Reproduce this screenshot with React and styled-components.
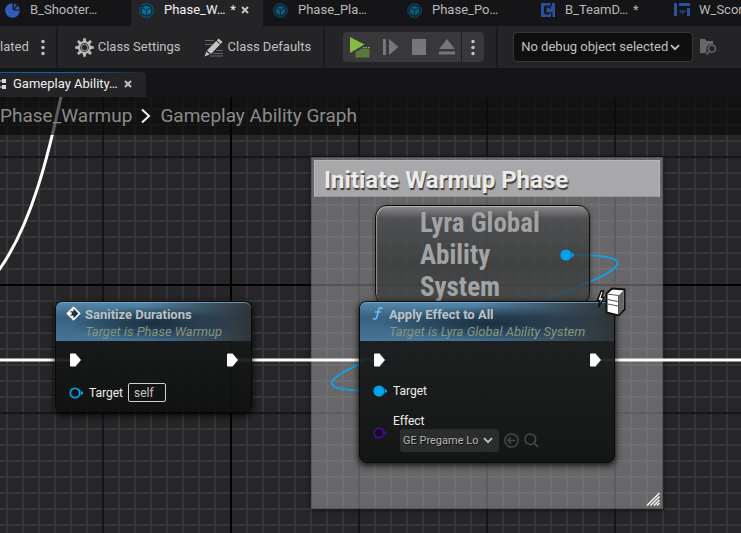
import React from "react";
import styled, { createGlobalStyle, css } from "styled-components";

const GlobalStyle = createGlobalStyle`
  *, *::before, *::after { box-sizing: border-box; }
  body {
    margin: 0;
    background: #151517;
    color: #c0c0c0;
    font-family: Roboto, "Liberation Sans", sans-serif;
    font-size: 13px;
    line-height: 16px;
    overflow: hidden;
  }
  button, input, select { font: inherit; color: inherit; }
  button { background: none; border: 0; padding: 0; }
  h2, h3, p { margin: 0; }
  svg { display: block; flex: none; }
`;

/* ---------- shell ---------- */

const Editor = styled.div`
  display: flex;
  flex-direction: column;
  min-height: 100vh;
  overflow: hidden;
`;

const AssetTabs = styled.nav`
  display: flex;
  gap: 2px;
  height: 26px;
  margin-left: -3px;
  overflow: hidden;
`;

const AssetTab = styled.button`
  display: flex;
  flex: none;
  align-items: center;
  gap: 10px;
  width: 132px;
  padding: 0 8px 6px;
  white-space: nowrap;
  color: ${(p) => (p.$active ? "#f2f2f2" : "#b8b8b8")};
  background: ${(p) => (p.$active ? "#242426" : "transparent")};

  svg { overflow: visible; }
`;

const TabMark = styled.span`
  display: flex;
  align-items: center;
  gap: 5px;
  margin-left: -5px;
`;

const Toolbar = styled.div`
  display: flex;
  align-items: center;
  height: 42px;
  background: #242426;
  overflow: hidden;
`;

const ToolButton = styled.button`
  display: flex;
  flex: none;
  align-items: center;
  gap: 4px;
  height: 30px;
  margin-left: ${(p) => p.$gap || 0}px;
  white-space: nowrap;
`;

const Divider = styled.span`
  flex: none;
  width: 2px;
  height: 40px;
  margin-left: ${(p) => p.$gap || 0}px;
  background: #19191b;
`;

const PlayGroup = styled.div`
  display: flex;
  flex: none;
  height: 30px;
  margin-left: 18px;
  border-radius: 4px;
  overflow: hidden;
  background: #38383a;
`;

const PlayButton = styled.button`
  display: flex;
  align-items: center;
  justify-content: center;
  width: ${(p) => (p.$menu ? 23 : 28)}px;
  border-left: ${(p) => (p.$menu ? "1px solid #202022" : "0")};
  &:first-child { width: 34px; }
`;

const SelectBox = styled.label`
  position: relative;
  display: flex;
  flex: none;
  align-items: center;

  select {
    appearance: none;
    outline: 0;
    ${(p) =>
      p.$small
        ? css`
            width: 99px;
            height: 23px;
            padding: 0 19px 0 3px;
            font-size: 11px;
            color: #b4b4b4;
            background: #2b2c2c;
            border: 0;
            border-radius: 3px;
            text-shadow: 1px 1px 0 #111;
          `
        : css`
            width: 180px;
            height: 30px;
            padding: 0 24px 0 7px;
            background: #0f0f10;
            border: 1px solid #363638;
            border-radius: 4px;
          `}
  }
  svg {
    position: absolute;
    right: ${(p) => (p.$small ? 6 : 13)}px;
    pointer-events: none;
  }
`;

const DebugBar = styled.div`
  display: flex;
  align-items: center;
  gap: 7px;
  margin-left: 15px;
`;

const GraphTabs = styled.div`
  display: flex;
  height: 29px;
  padding-top: 4px;
`;

const GraphTab = styled.button`
  display: flex;
  align-items: center;
  gap: 6px;
  width: 146px;
  padding-bottom: 2px;
  border-top: 1px solid;
  border-image: linear-gradient(90deg, #0b5cab, #0b62bb 45%, #242426) 1;
  background: #242426;
  color: #f0f0f0;
  clip-path: inset(0 round 0 5px 0 0);
  white-space: nowrap;
`;

/* ---------- canvas ---------- */

const Canvas = styled.main`
  position: relative;
  flex: 1;
  overflow: hidden;
  background-color: #262628;
  background-image:
    linear-gradient(#000 2px, transparent 2px),
    linear-gradient(90deg, #000 2px, transparent 2px),
    linear-gradient(#161618 2px, transparent 2px),
    linear-gradient(90deg, #161618 2px, transparent 2px),
    linear-gradient(#353537 2px, transparent 2px),
    linear-gradient(90deg, #353537 2px, transparent 2px);
  background-size: 1024px 1024px, 1024px 1024px, 128px 128px, 128px 128px, 16px 16px, 16px 16px;
  background-position: 0 187px, 230px 0, 0 59px, 102px 0, 0 11px, 6px 0;
`;

const Breadcrumb = styled.nav`
  position: absolute;
  inset: 0 0 auto 0;
  display: flex;
  align-items: center;
  gap: 9px;
  height: 38px;
  padding-bottom: 1px;
  background: rgba(8, 8, 9, 0.66);
  font-size: 19px;
  line-height: 24px;
  white-space: nowrap;

  a { color: #8b8b8b; text-decoration: none; }
`;

const Wires = styled.svg`
  position: absolute;
  inset: 0;
  width: 100%;
  height: 100%;
  fill: none;
`;

const placed = css`
  position: absolute;
  left: ${(p) => p.$x}px;
  top: ${(p) => p.$y}px;
  width: ${(p) => p.$w}px;
`;

const Comment = styled.section`
  ${placed}
  height: 352px;
  padding: 3px;
  background: rgba(176, 176, 178, 0.47);
  border: 1px solid rgba(70, 70, 72, 0.6);
  box-shadow: 0 1px 5px rgba(0, 0, 0, 0.7);

  h2 {
    padding: 4px 9px 1px;
    margin: -1px;
    font-size: 24px;
    line-height: 30px;
    font-weight: 700;
    color: #ebebeb;
    text-shadow: 1px 2px 1px #3c3c3c;
    background: #a8a8aa;
    border: 1px solid #b6b6b8;
    border-bottom-color: #999;
  }
`;

const ResizeGrip = styled.svg`
  position: absolute;
  right: 2px;
  bottom: 2px;
`;

const VariableNode = styled.section`
  ${placed}
  display: flex;
  align-items: flex-start;
  justify-content: space-between;
  height: 100px;
  padding: 1px 14px 0 44px;
  border: 1px solid #0d0d0d;
  border-radius: 12px;
  background: linear-gradient(rgba(145, 145, 147, 0.85), rgba(72, 73, 74, 0.8) 13px, rgba(52, 54, 54, 0.76) 60%, rgba(62, 63, 63, 0.76));
  box-shadow: inset 1px 1px 1px rgba(225, 225, 225, 0.5), 0 1px 4px rgba(0, 0, 0, 0.5);

  h3 {
    width: 124px;
    font-family: "Roboto Condensed", Roboto, sans-serif;
    font-size: 27px;
    line-height: 32px;
    font-weight: 700;
    color: #a3a3a4;
  }
  svg { margin-top: 42px; }
`;

const Node = styled.section`
  ${placed}
  display: flex;
  flex-direction: column;
  border: 1px solid #080909;
  border-radius: 7px;
  background: linear-gradient(rgba(26, 29, 29, 0.92), rgba(15, 17, 17, 0.94));
  box-shadow: 0 2px 6px 1px rgba(0, 0, 0, 0.75);
`;

const NodeHeader = styled.header`
  display: flex;
  align-items: flex-start;
  gap: 4px;
  height: 39px;
  padding: 4px 8px 0 10px;
  border-radius: 6px 6px 0 0;
  background:
    radial-gradient(ellipse 42% 44% at 50% 56%, rgba(21, 38, 54, 0.85), rgba(24, 44, 60, 0.55) 50%, rgba(26, 46, 64, 0)),
    linear-gradient(90deg, rgba(44, 48, 50, 0) 45%, rgba(46, 49, 51, 0.95)),
    linear-gradient(#5489ae, #39617f 40%, #467597);
  box-shadow: inset 0 1px 0 rgba(130, 180, 215, 0.7);
  white-space: nowrap;

  h3 { font-size: 13px; line-height: 17px; font-weight: 700; color: #bcc1c4; }
  p { font-size: 13px; line-height: 17px; font-style: italic; color: #87957c; }
`;

const NodeBody = styled.div`
  display: flex;
  flex-direction: column;
  gap: ${(p) => p.$gap || 0}px;
  padding: 10px 12px 10px 13px;
  font-size: 12px;
  color: #eeeeee;
`;

const PinRow = styled.div`
  display: flex;
  align-items: center;
  justify-content: ${(p) => (p.$split ? "space-between" : "flex-start")};
  gap: 5px;
  min-height: 18px;
  white-space: nowrap;
`;

const SelfInput = styled.input`
  width: 38px;
  height: 19px;
  padding: 0 5px;
  font-size: 12px;
  color: #c4c4c4;
  background: transparent;
  border: 1px solid #d0d0d0;
  border-radius: 2px;
  outline: 0;
`;

const AssetPicker = styled.div`
  display: flex;
  flex-direction: column;
`;

const AssetRow = styled.div`
  display: flex;
  align-items: center;
  gap: 5px;
  height: 23px;
  padding-left: 7px;
`;

const ServerBadge = styled.svg`
  position: absolute;
  right: -14px;
  top: -16px;
`;

/* ---------- icons ---------- */

const CubeIcon = ({ dim }) => (
  <svg width="15" height="15" viewBox="0 0 15 15">
    <g opacity={dim ? 0.75 : 1}>
      <circle cx="7.5" cy="7.5" r="6.8" fill="#08293a" stroke="#0c6285" />
      <path d="M7.5 2.5 11.7 4.4 7.5 6.4 3.3 4.4Z M2.9 5.3 7 7.3V12.4L2.9 10.1Z M12.1 5.3 8 7.3V12.4L12.1 10.1Z" fill="#0c6f95" />
    </g>
  </svg>
);

const PieIcon = () => (
  <svg width="15" height="15" viewBox="0 0 15 15">
    <path d="M7.500 .2A7.300 7.300 0 1 0 14.800 7.500H9.500L7.500 6.500Z" fill="#335bb9" />
    <path d="M8.800 5.400V.4A7 7 0 0 1 12 1.900Z" fill="#2c4f9f" />
    <path d="M9.600 6.400 13 2.800A7 7 0 0 1 14.700 6.400Z" fill="#335bb9" />
  </svg>
);

const TeamIcon = () => (
  <svg width="14" height="14" viewBox="0 0 14 14">
    <path fillRule="evenodd" d="M0 0H9.500V3H11V0H14V14H11.500V9H10V14H0Z M4.500 2.500 3 4V10L4.500 11.500H8L9 10.500V9H7.500L7 9.500H5.500V4.500H8L8.500 5.500H10V4L8.500 2.500Z" fill="#2a509e" />
  </svg>
);

const WidgetIcon = () => (
  <svg width="14" height="14" viewBox="1 0 14 14">
    <path d="M0 0H3V13H0Z M5 0H16V3H5Z M13 5H16V13H13Z" fill="#2a509e" />
    <path d="M8.500 11.500 5.300 8.500V7H7.500L8.500 8 9.500 7H11.700V8.500Z" fill="#223765" />
  </svg>
);

const CloseIcon = () => (
  <svg width="8" height="8" viewBox="0 0 8 8" stroke="#c4c4c4" strokeWidth="2">
    <path d="M1 1 7 7M7 1 1 7" />
  </svg>
);

const DotsIcon = () => (
  <svg width="4" height="17" viewBox="0 0 4 17" fill="#c4c4c4">
    <circle cx="2" cy="2.500" r="1.700" />
    <circle cx="2" cy="8.500" r="1.700" />
    <circle cx="2" cy="14.500" r="1.700" />
  </svg>
);

const TEETH = [0, 45, 90, 135, 180, 225, 270, 315];

const GearIcon = () => (
  <svg width="19" height="19" viewBox="0 0 19 19">
    {TEETH.map((a) => (
      <path key={a} d="M8.200 .2H10.800L11.200 4H7.800Z" fill="#b9b9b9" transform={`rotate(${a} 9.5 9.5)`} />
    ))}
    <circle cx="9.500" cy="9.500" r="5.400" fill="#242426" stroke="#b9b9b9" strokeWidth="2" />
    <circle cx="9.500" cy="9.500" r="3.200" fill="none" stroke="#858585" strokeWidth="1.200" />
  </svg>
);

const PencilIcon = () => (
  <svg width="20" height="19" viewBox="0 0 20 19">
    <path d="M1 2.500H10M1 6.500H8M12 12.500H19M9 15.500H19M6 18H19" stroke="#66666a" />
    <path d="M14.500 .5 18.500 4 16.800 5.900 12.900 2.400Z M12.200 3.100 16.100 6.600 7 16 3 12.500Z M2.300 13.400 5.700 16.400 .6 18.400Z" fill="#c4c4c4" />
  </svg>
);

const PlayIcon = () => (
  <svg width="20" height="21" viewBox="0 0 20 21">
    <path d="M0 0 14.500 7.500 0 16Z" fill="#84bd41" />
    <path d="M5.500 15 12 11.500H19.500V20.500H5.500Z" fill="#587a3b" />
    <path d="M13 10.500H20" stroke="#9ab67f" strokeDasharray="1.500 1" />
  </svg>
);

const StepIcon = () => (
  <svg width="16" height="16" viewBox="0 0 16 16" fill="#77777a">
    <path d="M0 0H3V16H0Z M6 0 15.500 8 6 16Z" />
  </svg>
);

const StopIcon = () => (
  <svg width="14" height="16" viewBox="0 0 14 16" fill="#77777a">
    <path d="M0 0H14V16H0Z" />
  </svg>
);

const EjectIcon = () => (
  <svg width="16" height="16" viewBox="0 0 16 16" fill="#77777a">
    <path d="M8 0 15.800 10H.2Z M0 12.500H16V15.500H0Z" />
  </svg>
);

const ChevronDown = () => (
  <svg width="10" height="7" viewBox="0 0 10 7" fill="none" stroke="#c4c4c4" strokeWidth="1.700">
    <path d="M1 1.200 5 5.200 9 1.200" />
  </svg>
);

const FolderSearchIcon = () => (
  <svg width="17" height="16" viewBox="0 0 17 16">
    <path d="M0 0H5L7 2H13V5.200A5 5 0 0 0 6.500 10.500L6 14H0Z" fill="#68686a" />
    <circle cx="12" cy="9.500" r="3.500" fill="none" stroke="#68686a" strokeWidth="1.600" />
    <path d="M9.600 12 6.500 15.500" stroke="#68686a" strokeWidth="1.800" />
  </svg>
);

const GraphIcon = () => (
  <svg width="7" height="12" viewBox="0 0 7 12" fill="#d8d8d8">
    <path d="M2 1H6V5H2Z M2 7H6V11H2Z M0 2.500H2V3.500H0Z M0 8.500H2V9.500H0Z" />
  </svg>
);

const CrumbArrow = () => (
  <svg width="10" height="16" viewBox="0 0 10 16" fill="none" stroke="#f0f0f0" strokeWidth="2">
    <path d="M1 1.500 8 8 1 14.500" />
  </svg>
);

const EventIcon = () => (
  <svg width="15" height="15" viewBox="0 0 15 15">
    <path d="M7.500 .8 14.200 7.500 7.500 14.200 .8 7.500Z" fill="#fff" stroke="#f3f3f3" strokeLinejoin="round" />
    <path d="M7.500 2.600 12.400 7.500 7.500 12.400V9.800H4.300V5.200H7.500Z" fill="#22313d" />
    <path d="M3 6.300H5.700V8.700H3Z" fill="#fff" />
  </svg>
);

const FunctionIcon = () => (
  <svg width="15" height="15" viewBox="-2 0 15 15" fill="none" stroke="#69bdf1" strokeLinecap="round">
    <path d="M10 2.300C8.500 1 7.200 1.500 6.700 3.600L5 10.800C4.400 13.200 3 13.500 1.500 12.500" strokeWidth="1.600" />
    <path d="M3.500 6H8.500" strokeWidth="1.400" />
  </svg>
);

const ExecPin = () => (
  <svg width="13" height="14" viewBox="0 0 13 14">
    <path d="M1 1.500Q1 .5 2 .5H6.500L12 7 6.500 13.500H2Q1 13.500 1 12.500Z" fill="#fff" />
  </svg>
);

const DataPin = ({ color, filled }) => (
  <svg width="15" height="12" viewBox="0 0 15 12">
    <circle cx="6" cy="6" r={filled ? 5.6 : 4.7} fill={filled ? color : "#0d0f10"} stroke={color} strokeWidth={filled ? 0 : 1.8} />
    <path d="M11.800 3.200 14.500 6 11.800 8.800Z" fill={color} />
  </svg>
);

const UseAssetIcon = () => (
  <svg width="15" height="15" viewBox="0 0 15 15" fill="none" stroke="#484a4a" strokeWidth="1.500">
    <circle cx="7.500" cy="7.500" r="6.600" />
    <path d="M11.300 7.500H4M7 4.300 3.900 7.500 7 10.700" />
  </svg>
);

const BrowseIcon = () => (
  <svg width="15" height="15" viewBox="0 0 15 15" fill="none" stroke="#484a4a" strokeWidth="1.600">
    <circle cx="6.300" cy="6.300" r="5.300" />
    <path d="M10.200 10.200 14.300 14.300" />
  </svg>
);

/* ---------- data ---------- */

const TABS = [
  { name: "B_Shooter…", Icon: PieIcon },
  { name: "Phase_W…", Icon: CubeIcon, active: true, dirty: true, closable: true },
  { name: "Phase_Pla…", Icon: CubeIcon, dim: true },
  { name: "Phase_Po…", Icon: CubeIcon, dim: true },
  { name: "B_TeamD…", Icon: TeamIcon, dirty: true },
  { name: "W_Scor", Icon: WidgetIcon },
];

const BLUE = "#00a1f0";
const PURPLE = "#4a0a9c";

export default function App() {
  return (
    <Editor>
      <GlobalStyle />
      <AssetTabs aria-label="Open assets">
        {TABS.map(({ name, Icon, active, dim, dirty, closable }) => (
          <AssetTab key={name} $active={active}>
            <Icon dim={dim} />
            {name}
            {dirty && (
              <TabMark>
                * {closable && <CloseIcon />}
              </TabMark>
            )}
          </AssetTab>
        ))}
      </AssetTabs>

      <Toolbar>
        <ToolButton>lated</ToolButton>
        <ToolButton $gap={12} aria-label="More options"><DotsIcon /></ToolButton>
        <Divider $gap={11} />
        <ToolButton $gap={17}><GearIcon />Class Settings</ToolButton>
        <ToolButton $gap={23}><PencilIcon />Class Defaults</ToolButton>
        <Divider $gap={12} />
        <PlayGroup>
          <PlayButton aria-label="Play"><PlayIcon /></PlayButton>
          <PlayButton aria-label="Step"><StepIcon /></PlayButton>
          <PlayButton aria-label="Stop"><StopIcon /></PlayButton>
          <PlayButton aria-label="Eject"><EjectIcon /></PlayButton>
          <PlayButton $menu aria-label="Play options"><DotsIcon /></PlayButton>
        </PlayGroup>
        <Divider $gap={12} />
        <DebugBar>
          <SelectBox>
            <select aria-label="Debug object">
              <option>No debug object selected</option>
            </select>
            <ChevronDown />
          </SelectBox>
          <ToolButton aria-label="Find debug object"><FolderSearchIcon /></ToolButton>
        </DebugBar>
      </Toolbar>

      <GraphTabs>
        <GraphTab>
          <GraphIcon />
          Gameplay Ability…
          <CloseIcon />
        </GraphTab>
      </GraphTabs>

      <Canvas>
        <Comment $x={311} $y={60} $w={352}>
          <h2>Initiate Warmup Phase</h2>
          <ResizeGrip width="14" height="14" viewBox="0 0 14 14" stroke="#f5f5f5" strokeWidth="1.500">
            <path d="M1 13.500 13.500 1M4.500 13.500 13.500 4.500M8 13.500 13.500 8M11 13.500 13.500 11" />
          </ResizeGrip>
        </Comment>

        <Wires>
          <path d="M62 -5C49 56 32 127 -1 173" stroke="#fff" strokeWidth="3" />
          <path d="M0 263H70M236 263H374M600 263H2000" stroke="#fff" strokeWidth="3" />
          <path d="M574 158C782 158 168 294 375 294" stroke="#149fe4" strokeWidth="2" />
        </Wires>

        <VariableNode $x={375} $y={108} $w={215}>
          <h3>Lyra Global Ability System</h3>
          <DataPin color={BLUE} filled />
        </VariableNode>

        <Node $x={55} $y={204} $w={197}>
          <NodeHeader>
            <EventIcon />
            <div>
              <h3>Sanitize Durations</h3>
              <p>Target is Phase Warmup</p>
            </div>
          </NodeHeader>
          <NodeBody $gap={14}>
            <PinRow $split><ExecPin /><ExecPin /></PinRow>
            <PinRow>
              <DataPin color={BLUE} />
              <label htmlFor="target-self">Target</label>
              <SelfInput id="target-self" defaultValue="self" />
            </PinRow>
          </NodeBody>
        </Node>

        <Node $x={359} $y={204} $w={256}>
          <NodeHeader>
            <FunctionIcon />
            <div>
              <h3>Apply Effect to All</h3>
              <p>Target is Lyra Global Ability System</p>
            </div>
          </NodeHeader>
          <NodeBody $gap={13}>
            <PinRow $split><ExecPin /><ExecPin /></PinRow>
            <PinRow><DataPin color={BLUE} filled />Target</PinRow>
            <PinRow>
              <DataPin color={PURPLE} />
              <AssetPicker>
                <label htmlFor="effect-class">Effect</label>
                <AssetRow>
                  <SelectBox as="div" $small>
                    <select id="effect-class">
                      <option>GE Pregame Lo</option>
                    </select>
                    <ChevronDown />
                  </SelectBox>
                  <ToolButton aria-label="Use selected asset"><UseAssetIcon /></ToolButton>
                  <ToolButton aria-label="Browse to asset"><BrowseIcon /></ToolButton>
                </AssetRow>
              </AssetPicker>
            </PinRow>
          </NodeBody>
          <ServerBadge width="32" height="32" viewBox="0 0 32 32">
            <path d="M5 5 1.500 14.500H4L2.500 21.500 8 11.500H5.500L7.500 5Z" fill="#fff" stroke="#111" strokeWidth="1.500" />
            <path d="M10.500 7.500 16 2.500 28.500 3.500V23.500L22.500 29.500 10.500 26.500Z" fill="#fff" stroke="#111" strokeWidth="2" />
            <path d="M22.500 9.500 27.500 4.500V23L22.500 28.500Z" fill="#666" />
            <path d="M11 8 22.500 9.500V28.500M11.500 13.500 22 15.500M11.500 18 22 20" fill="none" stroke="#555" />
          </ServerBadge>
        </Node>

        <Breadcrumb aria-label="Graph path">
          <a href="#phase">Phase_Warmup</a>
          <CrumbArrow />
          <a href="#graph">Gameplay Ability Graph</a>
        </Breadcrumb>
      </Canvas>
    </Editor>
  );
}
